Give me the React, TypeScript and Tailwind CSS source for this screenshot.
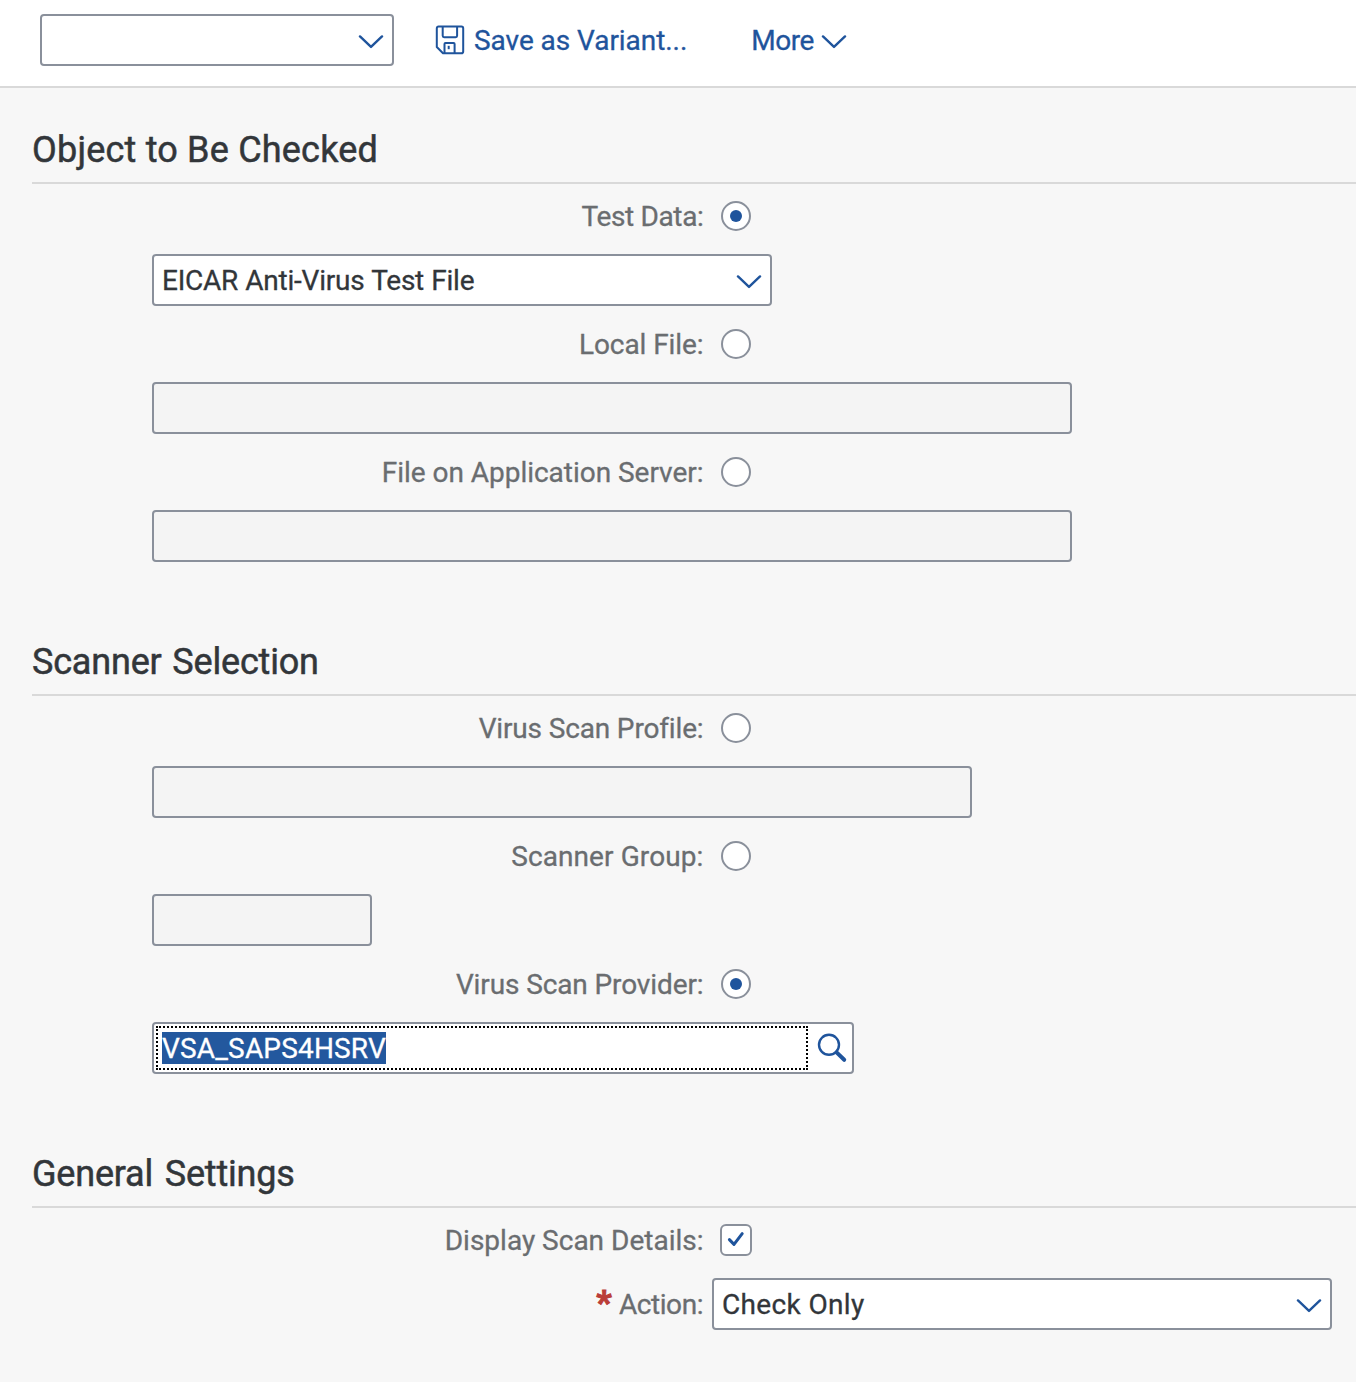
import type { ReactNode } from 'react';

const Chevron = () => (
  <svg width="26" height="14" viewBox="0 0 26 14" fill="none" stroke="#1f549c" strokeWidth="2.4" strokeLinecap="round" strokeLinejoin="round">
    <path d="M2 1.4 L13 11.9 L24 1.4" />
  </svg>
);

const SaveIcon = () => (
  <svg width="30" height="30" viewBox="0 0 30 30" fill="none" stroke="#1f549c" strokeWidth="2" strokeLinejoin="round">
    <path d="M3.6 1.6 H26.4 Q28.2 1.6 28.2 3.4 V26.4 Q28.2 28.2 26.4 28.2 H8 L1.8 22 V3.4 Q1.8 1.6 3.6 1.6 Z" />
    <path d="M7.7 1.6 V10.8 Q7.7 12.2 9.1 12.2 H20.7 Q22.1 12.2 22.1 10.8 V1.6" />
    <path d="M9.5 28.2 V19 Q9.5 18 10.5 18 H18.6 Q19.6 18 19.6 19 V28.2" />
    <path d="M13.7 20.8 V24.2" />
  </svg>
);

const SearchIcon = () => (
  <svg width="32" height="32" viewBox="0 0 32 32" fill="none" stroke="#1f549c" strokeLinecap="round">
    <circle cx="13" cy="12.8" r="10" strokeWidth="2.4" />
    <path d="M20.6 20.4 L28.2 27.8" strokeWidth="4" />
  </svg>
);

const Label = ({ children, spacing = '' }: { children: ReactNode; spacing?: string }) => (
  <span className={`w-[704px] shrink-0 whitespace-nowrap pr-[0.5px] pt-0.5 text-right text-[#6a6d70] ${spacing}`}>{children}</span>
);

const RadioRow = ({ label, spacing, checked = false }: { label: string; spacing?: string; checked?: boolean }) => (
  <div className="flex h-16 items-center">
    <Label spacing={spacing}>{label}</Label>
    <span className="ml-[17px] flex size-[30px] items-center justify-center rounded-full border-2 border-[#8a909b] bg-white">
      {checked && <span className="size-3 rounded-full bg-[#1f549c]" />}
    </span>
  </div>
);

const DisabledField = ({ width }: { width: string }) => (
  <div className="flex h-16 items-center pl-[152px]">
    <div className={`h-[52px] rounded-[4px] border-2 border-[#8a909b] bg-[#f4f4f4] ${width}`} />
  </div>
);

const Select = ({ value = '', className }: { value?: string; className: string }) => (
  <div className={`flex h-[52px] items-center justify-between rounded-[4px] border-2 border-[#8a909b] bg-white pl-2 pr-2 text-[#32363a] ${className}`}>
    <span className="whitespace-nowrap pt-0.5">{value}</span>
    <span className="pt-[3px]"><Chevron /></span>
  </div>
);

const Section = ({ title, spacing, children }: { title: string; spacing: string; children: ReactNode }) => (
  <section className="mb-8">
    <h2 className={`ml-8 flex h-24 items-end border-b-2 border-[#d9d9d9] pb-[11px] text-[36px] leading-[42px] text-[#32363a] [-webkit-text-stroke:0.5px] ${spacing}`}>{title}</h2>
    {children}
  </section>
);

export default function App() {
  return (
    <div className="h-[1382px] w-[1356px] overflow-hidden bg-[#f7f7f7] font-['Roboto',sans-serif] text-[28px] leading-[34px] [-webkit-text-stroke:0.3px]">
      <header className="flex h-[88px] items-start border-b-2 border-[#d9d9d9] bg-white pt-[14px] pl-10 text-[#1f549c]">
        <Select className="w-[354px]" />
        <button className="ml-[41px] flex h-[52px] items-center gap-[9px] whitespace-nowrap tracking-[-0.05px]">
          <SaveIcon />
          <span className="pt-0.5">Save as Variant...</span>
        </button>
        <button className="ml-[64px] flex h-[52px] items-center gap-[7px] tracking-[-0.5px]">
          <span className="pt-0.5">More</span>
          <span className="pt-[3px]"><Chevron /></span>
        </button>
      </header>
      <main>
        <Section title="Object to Be Checked" spacing="tracking-[0.2px]">
          <RadioRow label="Test Data:" spacing="tracking-[-0.35px]" checked />
          <div className="flex h-16 items-center pl-[152px]">
            <Select value="EICAR Anti-Virus Test File" className="w-[620px] tracking-[-0.23px] [word-spacing:0.5px]" />
          </div>
          <RadioRow label="Local File:" spacing="tracking-[-0.08px]" />
          <DisabledField width="w-[920px]" />
          <RadioRow label="File on Application Server:" spacing="tracking-[-0.03px]" />
          <DisabledField width="w-[920px]" />
        </Section>
        <Section title="Scanner Selection" spacing="tracking-[-0.18px] [word-spacing:2px]">
          <RadioRow label="Virus Scan Profile:" spacing="tracking-[-0.15px]" />
          <DisabledField width="w-[820px]" />
          <RadioRow label="Scanner Group:" spacing="tracking-[0.1px]" />
          <DisabledField width="w-[220px]" />
          <RadioRow label="Virus Scan Provider:" spacing="tracking-[-0.11px]" checked />
          <div className="flex h-16 items-center pl-[152px]">
            <div className="flex h-[52px] w-[702px] items-center rounded-[4px] border-2 border-[#8a909b] bg-white pl-0.5">
              <div className="flex h-11 w-[652px] items-center border-2 border-dotted border-black pl-1">
                <span className="h-8 w-[224px] whitespace-nowrap bg-[#23589e] pt-px leading-8 tracking-[0.18px] text-white">VSA_SAPS4HSRV</span>
              </div>
              <span className="ml-2"><SearchIcon /></span>
            </div>
          </div>
        </Section>
        <Section title="General Settings" spacing="tracking-[-0.2px] [word-spacing:3px]">
          <div className="flex h-16 items-center">
            <Label>Display Scan Details:</Label>
            <span className="ml-4 flex size-8 items-center justify-center rounded-[6px] border-2 border-[#8a909b] bg-white">
              <svg width="18" height="18" viewBox="0 0 18 18" fill="none" stroke="#1f549c" strokeWidth="3" strokeLinecap="round" strokeLinejoin="round">
                <path d="M2.4 8.6 L7 13.4 L15.2 2.6" />
              </svg>
            </span>
          </div>
          <div className="flex h-16 items-center">
            <span className="flex w-[704px] justify-end pt-0.5 pr-px tracking-[-0.45px] text-[#6a6d70]">
              <span className="mr-[8px] -mt-[2px] text-[33px] font-black text-[#ba3d38] [-webkit-text-stroke:1px]">*</span>
              Action:
            </span>
            <Select value="Check Only" className="ml-2 w-[620px] tracking-[0.35px]" />
          </div>
        </Section>
      </main>
    </div>
  );
}
